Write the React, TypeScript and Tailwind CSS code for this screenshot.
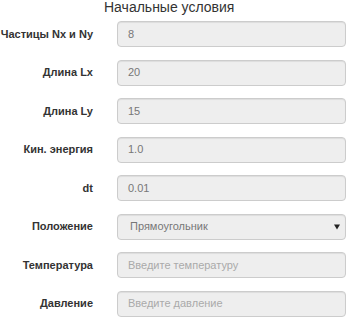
import React from 'react';

type Row = {
  label: string;
  value?: string;
  placeholder?: string;
  select?: boolean;
};

const rows: Row[] = [
  { label: 'Частицы Nx и Ny', value: '8' },
  { label: 'Длина Lx', value: '20' },
  { label: 'Длина Ly', value: '15' },
  { label: 'Кин. энергия', value: '1.0' },
  { label: 'dt', value: '0.01' },
  { label: 'Положение', value: 'Прямоугольник', select: true },
  { label: 'Температура', placeholder: 'Введите температуру' },
  { label: 'Давление', placeholder: 'Введите давление' },
];

const App: React.FC = () => {
  return (
    <div className="w-[348px] h-[319px] overflow-hidden bg-white font-['Liberation_Sans',Arial,sans-serif]">
      <div className="h-[20px] pl-[104px] text-[14px] leading-[15px] text-[#333]">
        Начальные условия
      </div>
      <div className="flex flex-col gap-[12.5px] pt-[1px]">
        {rows.map((row) => (
          <div key={row.label} className="flex items-center h-[26px]">
            <label className="w-[93px] shrink-0 text-right text-[11px] font-bold text-[#333] whitespace-nowrap">
              {row.label}
            </label>
            <div className="ml-[24px] w-[229px] h-[26px] relative rounded-[4px] border border-[#ccc] bg-[#eee] shadow-[inset_0_1px_1px_rgba(0,0,0,0.075)] flex items-center">
              {row.value ? (
                <span className={`text-[11px] text-[#777] ${row.select ? 'pl-[12px]' : 'pl-[10px]'}`}>
                  {row.value}
                </span>
              ) : (
                <span className="pl-[10px] text-[11px] text-[#aaa]">{row.placeholder}</span>
              )}
              {row.select && (
                <span className="absolute right-[5px] top-1/2 -translate-y-1/2 w-0 h-0 border-l-[3px] border-r-[3px] border-t-[5px] border-l-transparent border-r-transparent border-t-[#222]" />
              )}
            </div>
          </div>
        ))}
      </div>
    </div>
  );
};

export default App;
